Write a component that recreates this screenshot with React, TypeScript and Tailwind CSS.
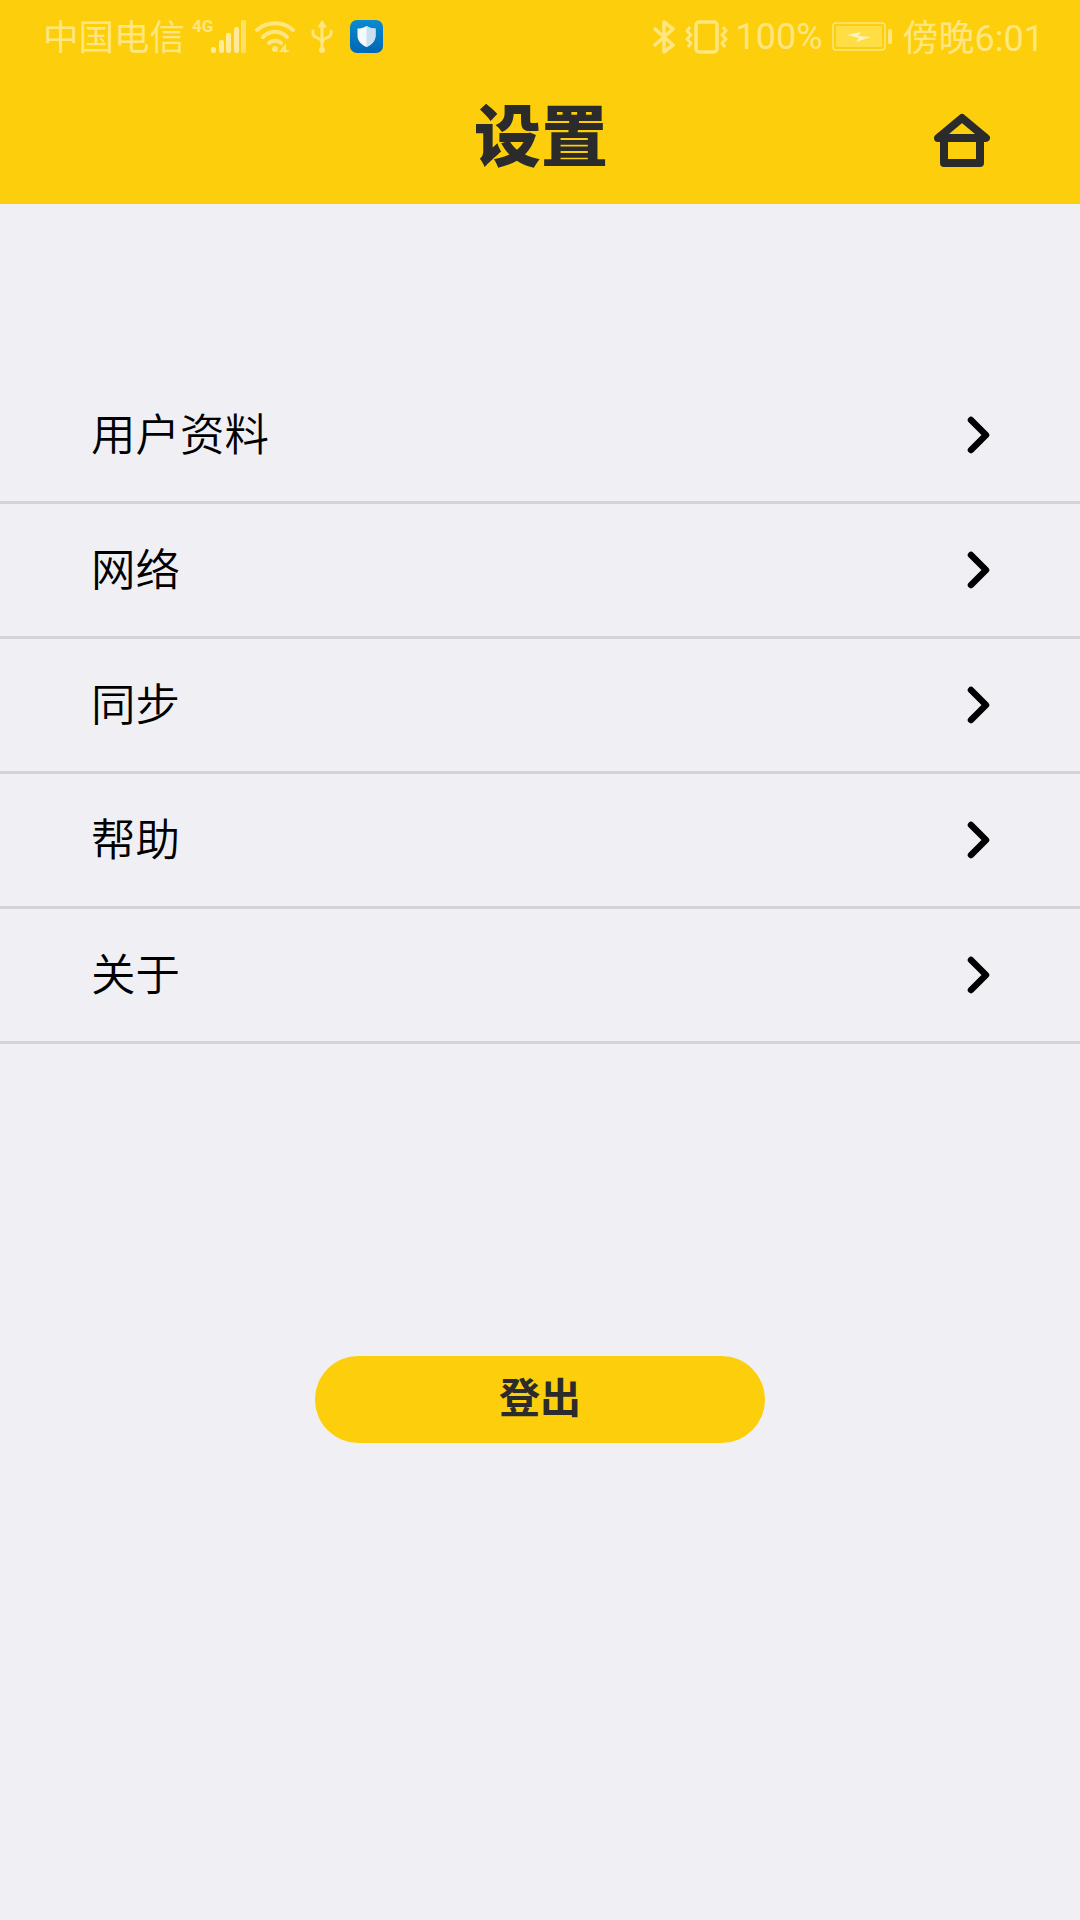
const font = { cjk: "font-['Noto_Sans_CJK_SC','Noto_Sans',sans-serif]" };

const rows = ["用户资料", "网络", "同步", "帮助", "关于"];

function Chevron() {
  return (
    <svg width="24" height="38" viewBox="0 0 24 38" fill="none">
      <path d="M4 4 L19 19 L4 34" stroke="#000" strokeWidth="6.5" strokeLinecap="round" strokeLinejoin="round" />
    </svg>
  );
}

function HomeIcon() {
  return (
    <svg width="56" height="54" viewBox="0 0 56 54" fill="none" stroke="#2b2b2b" strokeWidth="8" strokeLinejoin="round" strokeLinecap="round">
      <path d="M4 25 L28 5 L52 25 Z" />
      <path d="M10 26 V50 H46 V26" />
    </svg>
  );
}

function SignalIcon() {
  return (
    <svg width="36" height="34" viewBox="0 0 36 34">
      <rect x="0" y="27" width="5" height="6" rx="2" fill="#ffeb99" />
      <rect x="8" y="20" width="5" height="13" rx="2" fill="#ffeb99" />
      <rect x="15" y="13" width="5" height="20" rx="2" fill="#ffeb99" />
      <rect x="23" y="7" width="5" height="26" rx="2" fill="#ffeb99" />
      <rect x="30" y="0" width="5" height="33" rx="2" fill="#ffe067" />
    </svg>
  );
}

function WifiIcon() {
  return (
    <svg width="42" height="34" viewBox="0 0 42 34" fill="none" stroke="#ffe680" strokeWidth="4" strokeLinecap="round">
      <path d="M2 10 C12 1 28 1 38 10" />
      <path d="M8 17 C15 10 25 10 32 17" />
      <path d="M14 23 C17 20 23 20 26 23" />
      <circle cx="20" cy="29" r="3" fill="#ffe680" stroke="none" />
      <path d="M30 32 V26 L26 31 H33" strokeWidth="2" />
    </svg>
  );
}

function UsbIcon() {
  return (
    <svg width="24" height="34" viewBox="0 0 24 34" fill="none" stroke="#ffe680" strokeWidth="3" strokeLinecap="round">
      <path d="M12 4 V30" />
      <path d="M12 1 L8 7 H16 Z" fill="#ffe680" strokeWidth="1" />
      <circle cx="12" cy="30" r="3" fill="#ffe680" stroke="none" />
      <path d="M3 11 V14 C3 18 12 18 12 22" />
      <path d="M21 11 V14 C21 18 12 18 12 22" />
    </svg>
  );
}

function ShieldApp() {
  return (
    <svg width="33" height="33" viewBox="0 0 33 33">
      <defs>
        <linearGradient id="shieldBg" x1="0" y1="0" x2="0" y2="1">
          <stop offset="0" stopColor="#0a8ad0" />
          <stop offset="1" stopColor="#0067b5" />
        </linearGradient>
      </defs>
      <rect width="33" height="33" rx="7" fill="url(#shieldBg)" />
      <path d="M16.5 6 C19.5 8 22.5 8.5 25.5 8.5 V16 C25.5 21 21 25 16.5 27 C12 25 7.5 21 7.5 16 V8.5 C10.5 8.5 13.5 8 16.5 6 Z" fill="#f4f9fc" />
      <path d="M16.5 6 C19.5 8 22.5 8.5 25.5 8.5 V16 C25.5 21 21 25 16.5 27 Z" fill="#c9e0ef" />
    </svg>
  );
}

function BluetoothIcon() {
  return (
    <svg width="22" height="34" viewBox="0 0 22 34" fill="none" stroke="#ffe680" strokeWidth="3.5" strokeLinecap="round" strokeLinejoin="round">
      <path d="M2 9 L20 25 L11 32 V2 L20 9 L2 25" />
    </svg>
  );
}

function VibrateIcon() {
  return (
    <svg width="44" height="34" viewBox="0 0 44 34" fill="none" stroke="#ffe680" strokeLinejoin="round">
      <rect x="11" y="2" width="21" height="30" rx="3" strokeWidth="3.5" />
      <path d="M5 7 L2 11 L6 15 L2 19 L6 23 L3 27" strokeWidth="3" />
      <path d="M38 7 L41 11 L37 15 L41 19 L37 23 L40 27" strokeWidth="3" />
    </svg>
  );
}

function BatteryIcon() {
  return (
    <svg width="61" height="30" viewBox="0 0 61 30">
      <rect x="1" y="1" width="52" height="27" rx="3" fill="none" stroke="#ffe680" strokeWidth="1.5" />
      <rect x="4" y="4" width="46" height="21" rx="1" fill="#ffdd44" />
      <rect x="56" y="7" width="4" height="15" rx="1.5" fill="#ffe680" />
      <path d="M15 13 L29 10 L26 14 L39 15 L24 20 L27 16 Z" fill="#fff3bf" />
    </svg>
  );
}

export default function App() {
  return (
    <div className={`flex min-h-[1920px] w-[1080px] flex-col bg-[#efeff4] ${font.cjk}`}>
      <header className="flex h-[204px] flex-col bg-[#fdce0b]">
        <div className="flex h-[74px] items-center justify-between pl-[43px] pr-[36px] text-[#ffe680]">
          <div className="flex items-center">
            <span className="pb-[4px] text-[35.5px] leading-none">中国电信</span>
            <div className="relative ml-[26px] flex items-center">
              <span className="absolute -left-[19px] -top-[2px] text-[17px] font-bold leading-none font-['Roboto',sans-serif]">4G</span>
              <SignalIcon />
            </div>
            <div className="ml-[8px]"><WifiIcon /></div>
            <div className="ml-[13px]"><UsbIcon /></div>
            <div className="ml-[16px] pb-[2px]"><ShieldApp /></div>
          </div>
          <div className="flex items-center">
            <BluetoothIcon />
            <div className="ml-[10px]"><VibrateIcon /></div>
            <span className="ml-[6px] text-[36px] leading-none font-['Roboto',sans-serif]">100%</span>
            <div className="ml-[9px]"><BatteryIcon /></div>
            <span className="ml-[10px] text-[36px] leading-none">傍晚<span className="font-['Roboto',sans-serif]">6:01</span></span>
          </div>
        </div>
        <div className="relative flex flex-1 items-center justify-center pb-[16px] pl-[2px]">
          <h1 className="text-[67px] font-black leading-none text-[#2b2b2b]">设置</h1>
          <div className="absolute right-[90px] top-[39px]"><HomeIcon /></div>
        </div>
      </header>

      <ul className="mt-[165px]">
        {rows.map((label) => (
          <li key={label} className="flex h-[135px] items-center justify-between border-b-[3px] border-[#d3d3d8] pl-[91px] pr-[89px]">
            <span className="pb-[6px] text-[44.5px] font-[350] leading-none text-black">{label}</span>
            <Chevron />
          </li>
        ))}
      </ul>

      <button className="mx-auto mt-[312px] h-[87px] w-[450px] rounded-full bg-[#fdce0b] pb-[8px] text-[41px] font-bold text-[#2b2b2b]">
        登出
      </button>
    </div>
  );
}
